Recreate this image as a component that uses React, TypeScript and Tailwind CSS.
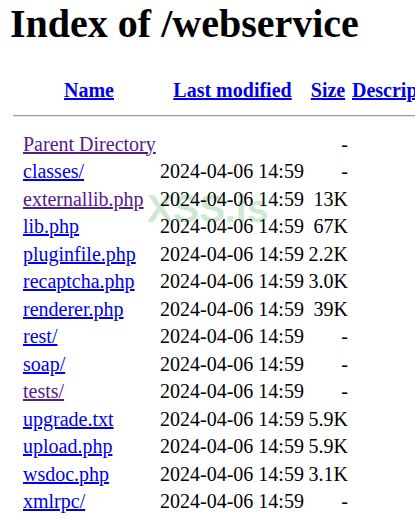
const files: { name: string; date: string; size: string; visited?: boolean }[] = [
  { name: 'Parent Directory', date: '', size: '-', visited: true },
  { name: 'classes/', date: '2024-04-06 14:59', size: '-' },
  { name: 'externallib.php', date: '2024-04-06 14:59', size: '13K', visited: true },
  { name: 'lib.php', date: '2024-04-06 14:59', size: '67K' },
  { name: 'pluginfile.php', date: '2024-04-06 14:59', size: '2.2K' },
  { name: 'recaptcha.php', date: '2024-04-06 14:59', size: '3.0K' },
  { name: 'renderer.php', date: '2024-04-06 14:59', size: '39K' },
  { name: 'rest/', date: '2024-04-06 14:59', size: '-' },
  { name: 'soap/', date: '2024-04-06 14:59', size: '-' },
  { name: 'tests/', date: '2024-04-06 14:59', size: '-', visited: true },
  { name: 'upgrade.txt', date: '2024-04-06 14:59', size: '5.9K' },
  { name: 'upload.php', date: '2024-04-06 14:59', size: '5.9K' },
  { name: 'wsdoc.php', date: '2024-04-06 14:59', size: '3.1K' },
  { name: 'xmlrpc/', date: '2024-04-06 14:59', size: '-' },
]

export default function App() {
  return (
    <div className="relative w-[415px] h-[518px] overflow-hidden bg-white text-black font-['Liberation_Serif',serif]">
      {/* watermark */}
      <div className="absolute left-[147px] top-[189px] text-[39px] leading-none font-bold text-[#cde9d2] font-['Liberation_Sans',sans-serif] select-none">
        XSS.is
      </div>

      <div className="relative">
        <h1 className="pt-[0.5px] pl-[10px] text-[40px] leading-[46px] font-bold whitespace-nowrap">
          Index of /webservice
        </h1>

        {/* header row */}
        <div className="mt-[30px] pl-[23px] grid grid-cols-[137px_145px_43px_auto] text-[20px] leading-[27.5px] font-bold whitespace-nowrap">
          <div className="pr-[5px] text-center">
            <a href="#" className="text-[#0000ee] underline">Name</a>
          </div>
          <div className="text-center">
            <a href="#" className="text-[#0000ee] underline">Last modified</a>
          </div>
          <div className="pl-[3px] text-center">
            <a href="#" className="text-[#0000ee] underline">Size</a>
          </div>
          <div className="pl-[4px]">
            <a href="#" className="text-[#0000ee] underline">Description</a>
          </div>
        </div>

        <div className="mt-[11px] ml-[13px] w-[600px] border-t border-b border-t-[#9a9a9a] border-b-[#e6e6e6]" />

        {/* rows */}
        <div className="mt-[13.5px] pl-[23px] flex flex-col text-[20px] leading-[27.5px] whitespace-nowrap">
          {files.map((f) => (
            <div key={f.name} className="grid grid-cols-[137px_145px_43px_auto] h-[27.5px]">
              <div>
                <a href="#" className={`underline ${f.visited ? 'text-[#551a8b]' : 'text-[#0000ee]'}`}>
                  {f.name}
                </a>
              </div>
              <div>{f.date}</div>
              <div className="text-right">{f.size}</div>
              <div className="pl-[4px]" />
            </div>
          ))}
        </div>
      </div>
    </div>
  )
}
